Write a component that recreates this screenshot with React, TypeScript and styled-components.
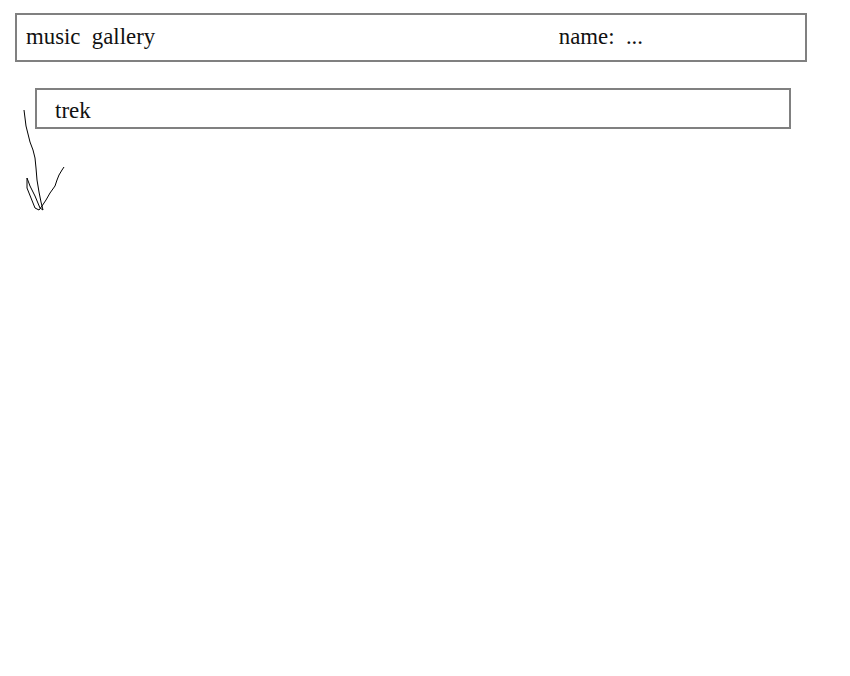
import React from "react";
import styled, { createGlobalStyle } from "styled-components";

const Global = createGlobalStyle`
  html, body { margin: 0; padding: 0; background: #ffffff; }
  body { font-family: "Liberation Serif", "Times New Roman", serif; color: #111; }
`;

const Page = styled.div`
  position: relative;
  width: 850px;
  height: 676px;
  padding: 13px 0 0 15px;
  box-sizing: border-box;
  display: flex;
  flex-direction: column;
  gap: 26px;
`;

const Header = styled.header`
  width: 792px;
  height: 49px;
  box-sizing: border-box;
  border: 2px solid #808080;
  display: flex;
  align-items: center;
  justify-content: space-between;
  padding: 0 162px 2px 9px;
  font-size: 22.8px;
`;

const Label = styled.span`
  white-space: pre;
`;

const Track = styled.div`
  margin-left: 20px;
  width: 756px;
  height: 41px;
  box-sizing: border-box;
  border: 2px solid #808080;
  display: flex;
  align-items: center;
  padding: 4px 0 0 18px;
  font-size: 23px;
`;

const Scribble = styled.svg`
  position: absolute;
  left: 0;
  top: 0;
  pointer-events: none;
`;

export default function App() {
  return (
    <>
      <Global />
      <Page>
        <Header>
          <Label>{"music  gallery"}</Label>
          <Label>{"name:  ..."}</Label>
        </Header>
        <Track>
          <Label>trek</Label>
        </Track>
        <Scribble width="850" height="676" viewBox="0 0 850 676">
          <polyline
            fill="none"
            stroke="#000"
            strokeWidth="1"
            points="24,110 25,118 26,126 28,134 30,142 33,150 35,158 36,168 37,180 39,192 41,202 43,210 40,208 35,196 30,186 27,178 27,188 31,198 35,208 39,210 42,206 46,200 50,193 55,186 57,180 59,175 62,170 64,167"
          />
        </Scribble>
      </Page>
    </>
  );
}
